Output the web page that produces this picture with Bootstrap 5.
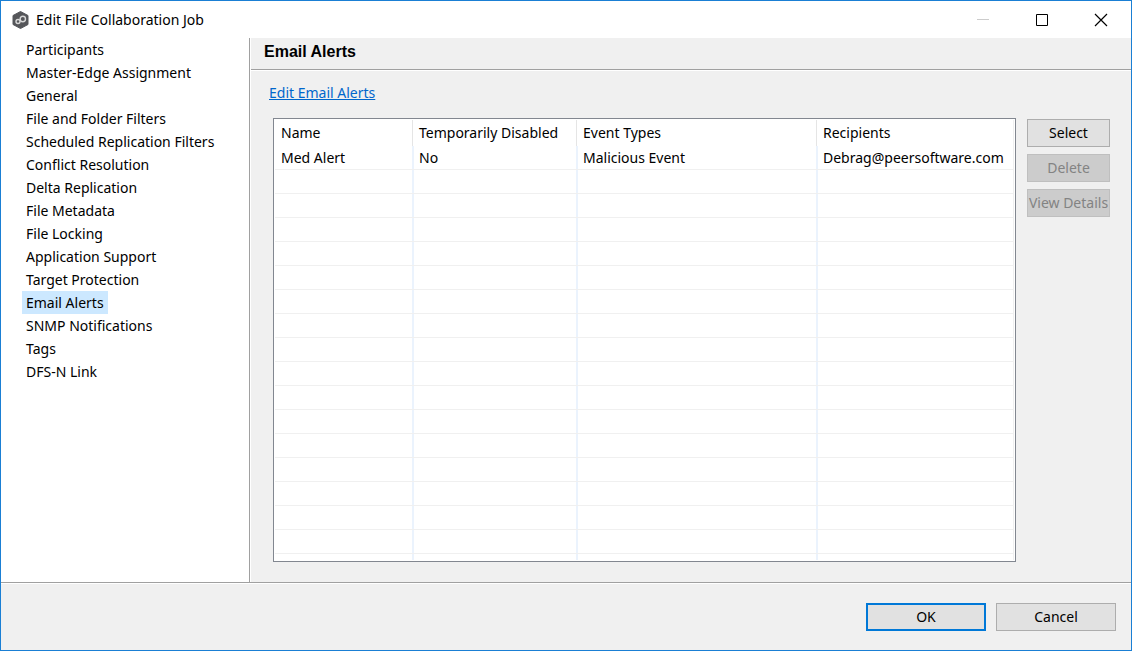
<!DOCTYPE html>
<html lang="en">
<head>
<meta charset="utf-8">
<meta name="viewport" content="width=device-width, initial-scale=1">
<title>Edit File Collaboration Job</title>
<link href="https://cdn.jsdelivr.net/npm/bootstrap@5.3.0/dist/css/bootstrap.min.css" rel="stylesheet">
<style>
  body { font-family: "Noto Sans", "Open Sans", sans-serif; font-size: 14px; line-height: 23px; color: #000; background: #fff; }
  .dialog { border: 1px solid #1a7fd4; }
  .titlebar { height: 37px; padding: 0 21px 0 11px; gap: 7px; }
  .caption-btn { width: 18px; height: 18px; padding: 0; border: 0; background: none; }
  .caption-set { gap: 41px; }
  .side { width: 249px; border-right: 1px solid #a0a0a0; padding-left: 21px; }
  .side .nav-link { color: #000; padding: 0 4px; line-height: 23px; border-radius: 0; }
  .side .nav-link.active { background: #cce8ff; }
  .pane { background: #f0f0f0; border-left: 1px solid #fff; }
  .pane-head { height: 32px; border-bottom: 1px solid #a0a0a0; padding: 2px 13px; }
  .pane-head h1 { font: bold 16px/23px "Liberation Sans", Arial, sans-serif; margin: 0; }
  .pane-body { border-top: 1px solid #fff; padding: 10px 21px 20px 18px; }
  .edit-link { color: #0066cc; }
  .grid-area { gap: 11px; padding-left: 4px; margin-top: 14px; }
  .list-box { background: #fff; border: 1px solid #828790; padding: 1px; }
  .alerts { table-layout: fixed; border-collapse: separate; border-spacing: 0; }
  .alerts th { height: 26px; padding: 0 5px; font-weight: 400; line-height: 26px; white-space: nowrap; background: linear-gradient(#e5e5e5, #e5e5e5) right 1px top / 1px 100% no-repeat; }
  .alerts td { height: 24px; padding: 0 5px; line-height: 23px; white-space: nowrap; border-bottom: 1px solid #f0f0f0; background: linear-gradient(#ebf3fd, #ebf3fd) right / 2px 100% no-repeat; }
  .alerts th:first-child, .alerts td:first-child { padding-left: 6px; }
  .alerts th:last-child, .alerts td:last-child { background: linear-gradient(#f0f0f0, #f0f0f0) right / 1px 100% no-repeat; }
  .alerts .tail td { height: 6px; border: 0; }
  .c1 { width: 139px; } .c2 { width: 164px; } .c3 { width: 240px; }
  .side-btns { width: 83px; gap: 7px; padding-top: 1px; }
  .push { --bs-btn-font-size: 14px; --bs-btn-line-height: 20px; --bs-btn-border-radius: 0; --bs-btn-padding-x: 0; --bs-btn-padding-y: 3px; --bs-btn-color: #000; --bs-btn-bg: #e1e1e1; --bs-btn-border-color: #adadad; --bs-btn-hover-bg: #e5f1fb; --bs-btn-hover-color: #000; --bs-btn-hover-border-color: #0078d7; --bs-btn-disabled-bg: #ccc; --bs-btn-disabled-color: #838383; --bs-btn-disabled-border-color: #bfbfbf; --bs-btn-disabled-opacity: 1; height: 28px; white-space: nowrap; overflow: hidden; }
  .side-btns .push { display: flex; justify-content: center; }
  .foot { background: #f0f0f0; border-top: 1px solid #a0a0a0; box-shadow: inset 0 1px #fff; padding: 20px 15px 19px; gap: 10px; }
  .foot .push { width: 120px; }
  .push-default { --bs-btn-border-color: #0078d7; --bs-btn-border-width: 2px; --bs-btn-padding-y: 2px; }
</style>
</head>
<body>
<div class="dialog d-flex flex-column min-vh-100">
  <header class="titlebar d-flex align-items-center">
    <svg width="17" height="18" viewBox="0 0 17 18" aria-hidden="true">
      <path d="M8.500 .5 16 4.500v9L8.500 17.500 1 13.500v-9z" fill="#55565a" stroke="#55565a" stroke-linejoin="round"/>
      <circle cx="6" cy="10.500" r="2" fill="none" stroke="#d8d8d8" stroke-width="1.400"/>
      <circle cx="10.800" cy="8" r="2.700" fill="none" stroke="#d8d8d8" stroke-width="1.400"/>
    </svg>
    <span>Edit File Collaboration Job</span>
    <div class="caption-set d-flex ms-auto">
      <button type="button" class="caption-btn d-flex" aria-label="Minimize" disabled><svg width="18" height="18"><path d="M3 8.500h12" stroke="#ccc"/></svg></button>
      <button type="button" class="caption-btn d-flex" aria-label="Maximize"><svg width="18" height="18"><path d="M3.500 3.500h11v11h-11z" fill="none" stroke="#000"/></svg></button>
      <button type="button" class="caption-btn d-flex" aria-label="Close"><svg width="18" height="18"><path d="M3 3l12 12M15 3L3 15" stroke="#000" stroke-width="1.200"/></svg></button>
    </div>
  </header>
  <div class="d-flex flex-grow-1">
    <nav class="side flex-shrink-0 nav flex-column flex-nowrap align-items-start" aria-label="Settings">
      <a class="nav-link" href="#">Participants</a>
      <a class="nav-link" href="#">Master-Edge Assignment</a>
      <a class="nav-link" href="#">General</a>
      <a class="nav-link" href="#">File and Folder Filters</a>
      <a class="nav-link" href="#">Scheduled Replication Filters</a>
      <a class="nav-link" href="#">Conflict Resolution</a>
      <a class="nav-link" href="#">Delta Replication</a>
      <a class="nav-link" href="#">File Metadata</a>
      <a class="nav-link" href="#">File Locking</a>
      <a class="nav-link" href="#">Application Support</a>
      <a class="nav-link" href="#">Target Protection</a>
      <a class="nav-link active" aria-current="page" href="#">Email Alerts</a>
      <a class="nav-link" href="#">SNMP Notifications</a>
      <a class="nav-link" href="#">Tags</a>
      <a class="nav-link" href="#">DFS-N Link</a>
    </nav>
    <main class="pane flex-grow-1 d-flex flex-column">
      <div class="pane-head"><h1>Email Alerts</h1></div>
      <div class="pane-body flex-grow-1 d-flex flex-column">
        <div><a class="edit-link" href="#">Edit Email Alerts</a></div>
        <div class="grid-area d-flex flex-grow-1">
          <div class="list-box flex-grow-1">
            <table class="alerts w-100">
              <colgroup><col class="c1"><col class="c2"><col class="c3"><col></colgroup>
              <thead><tr><th scope="col">Name</th><th scope="col">Temporarily Disabled</th><th scope="col">Event Types</th><th scope="col">Recipients</th></tr></thead>
              <tbody>
                <tr><td>Med Alert</td><td>No</td><td>Malicious Event</td><td>Debrag@peersoftware.com</td></tr>
                <tr><td></td><td></td><td></td><td></td></tr>
                <tr><td></td><td></td><td></td><td></td></tr>
                <tr><td></td><td></td><td></td><td></td></tr>
                <tr><td></td><td></td><td></td><td></td></tr>
                <tr><td></td><td></td><td></td><td></td></tr>
                <tr><td></td><td></td><td></td><td></td></tr>
                <tr><td></td><td></td><td></td><td></td></tr>
                <tr><td></td><td></td><td></td><td></td></tr>
                <tr><td></td><td></td><td></td><td></td></tr>
                <tr><td></td><td></td><td></td><td></td></tr>
                <tr><td></td><td></td><td></td><td></td></tr>
                <tr><td></td><td></td><td></td><td></td></tr>
                <tr><td></td><td></td><td></td><td></td></tr>
                <tr><td></td><td></td><td></td><td></td></tr>
                <tr><td></td><td></td><td></td><td></td></tr>
                <tr><td></td><td></td><td></td><td></td></tr>
                <tr class="tail"><td></td><td></td><td></td><td></td></tr>
              </tbody>
            </table>
          </div>
          <div class="side-btns d-flex flex-column flex-shrink-0">
            <button type="button" class="btn push">Select</button>
            <button type="button" class="btn push" disabled>Delete</button>
            <button type="button" class="btn push" disabled>View Details</button>
          </div>
        </div>
      </div>
    </main>
  </div>
  <footer class="foot d-flex justify-content-end">
    <button type="submit" class="btn push push-default">OK</button>
    <button type="button" class="btn push">Cancel</button>
  </footer>
</div>
<script src="https://cdn.jsdelivr.net/npm/bootstrap@5.3.0/dist/js/bootstrap.bundle.min.js"></script>
</body>
</html>
